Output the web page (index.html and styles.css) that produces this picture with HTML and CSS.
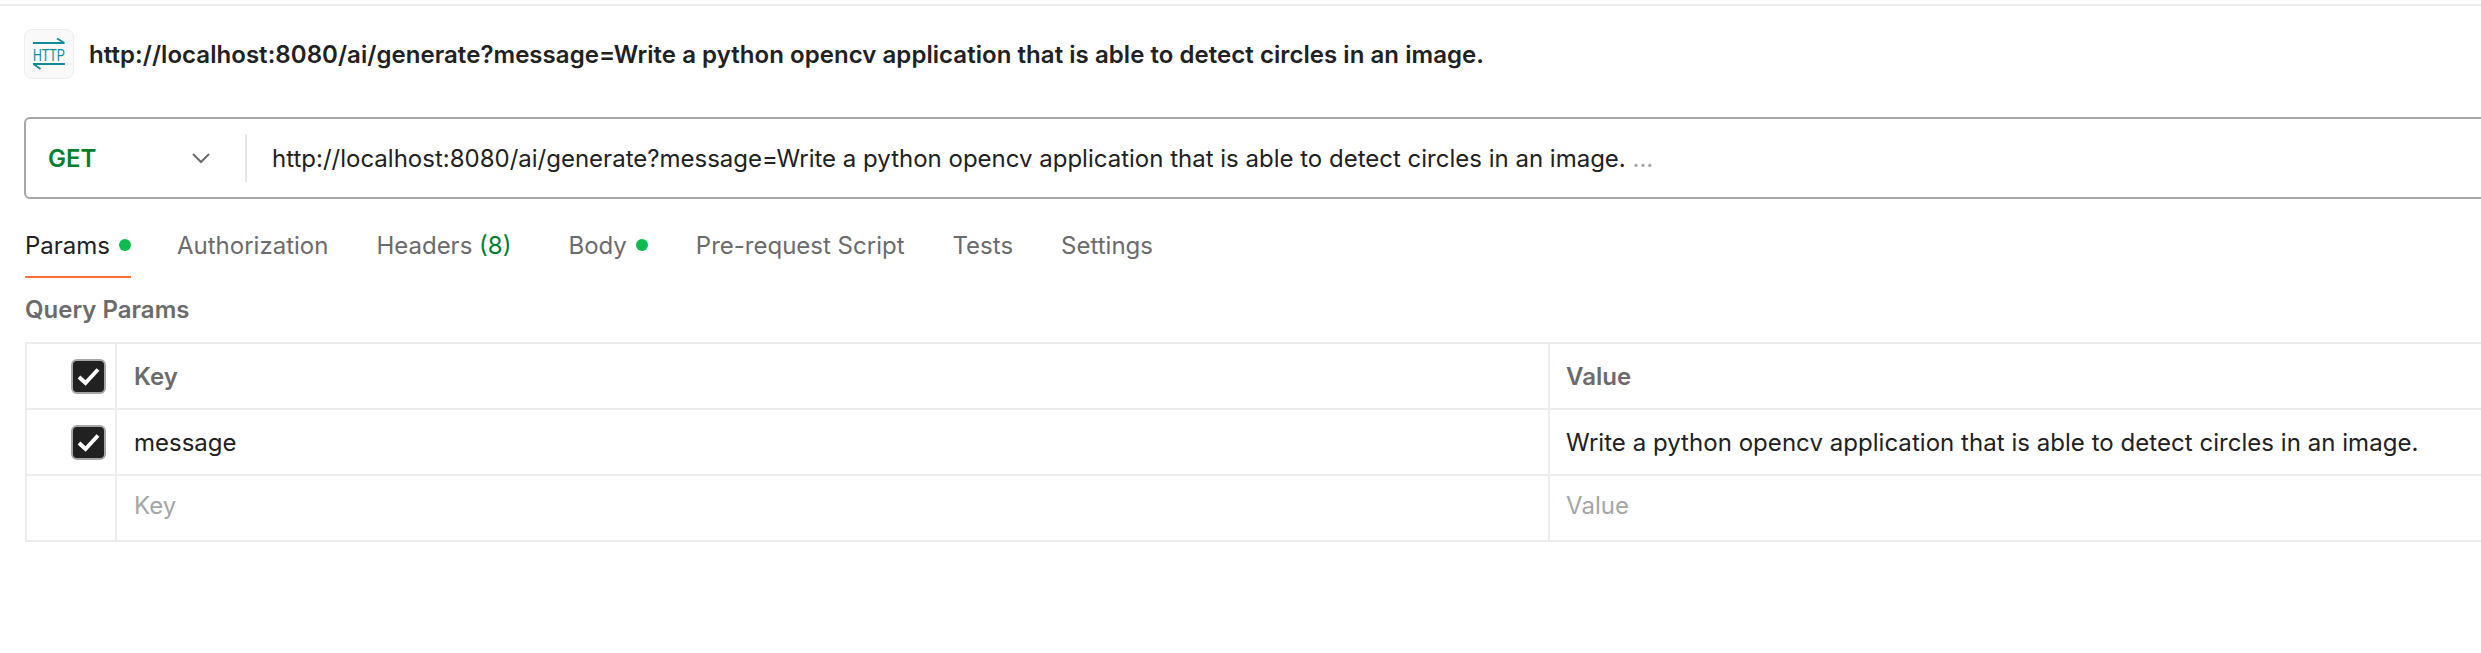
FILE: index.html
```html
<!DOCTYPE html>
<html lang="en">
<head>
<meta charset="utf-8">
<title>Request</title>
<link rel="stylesheet" href="styles.css">
</head>
<body>
<div class="topline"></div>
<header class="title-row">
  <div class="http-icon">
    <svg class="http-svg" width="34" height="34" viewBox="0 0 34 34" fill="none" stroke="#128a9b">
      <path d="M1 6H32.500M25 1.500L32.500 6" stroke-width="1.800"/>
      <path d="M1 27H33M1.500 27L8.500 32" stroke-width="1.800"/>
      <text x="1" y="23.500" textLength="32" lengthAdjust="spacingAndGlyphs" class="http-text">HTTP</text>
    </svg>
  </div>
  <h1 class="title">http://localhost:8080/ai/generate?message=Write a python opencv application that is able to detect circles in an image.</h1>
</header>
<section class="request">
  <div class="method">
    <span class="method-name">GET</span>
    <svg class="chevron" width="18" height="11" viewBox="0 0 18 11" fill="none" stroke="#6b6b6b" stroke-width="2"><path d="M1 1L9 9L17 1"/></svg>
  </div>
  <div class="url">http://localhost:8080/ai/generate?message=Write a python opencv application that is able to detect circles in an image.<span class="more"> ...</span></div>
</section>
<nav class="tabs">
  <div class="tab active">Params<span class="dot"></span></div>
  <div class="tab">Authorization</div>
  <div class="tab">Headers <span class="count">(8)</span></div>
  <div class="tab tab-body">Body<span class="dot"></span></div>
  <div class="tab">Pre-request Script</div>
  <div class="tab">Tests</div>
  <div class="tab">Settings</div>
</nav>
<h2 class="section-title">Query Params</h2>
<div class="table">
  <div class="cell check"><span class="checkbox"><svg width="23" height="19" viewBox="0 0 23 19" fill="none" stroke="#fff" stroke-width="4"><path d="M2 10L8.500 16L21 2.500"/></svg></span></div>
  <div class="cell head">Key</div>
  <div class="cell head value">Value</div>
  <div class="cell check"><span class="checkbox"><svg width="23" height="19" viewBox="0 0 23 19" fill="none" stroke="#fff" stroke-width="4"><path d="M2 10L8.500 16L21 2.500"/></svg></span></div>
  <div class="cell text">message</div>
  <div class="cell text value">Write a python opencv application that is able to detect circles in an image.</div>
  <div class="cell check"></div>
  <div class="cell placeholder">Key</div>
  <div class="cell placeholder value">Value</div>
</div>
</body>
</html>
```
FILE: styles.css
```css
html, body {
  margin: 0;
  padding: 0;
  height: 653px;
  overflow: hidden;
  background: #fff;
  font-family: Inter, "Liberation Sans", sans-serif;
  color: #212121;
}
.topline {
  height: 2px;
  margin-top: 4px;
  background: #ededed;
}
.title-row {
  display: flex;
  align-items: center;
  gap: 15px;
  margin: 23px 0 0 24px;
  height: 50px;
}
.http-icon {
  width: 48px;
  height: 48px;
  border: 1px solid #ededed;
  border-radius: 8px;
  background: #f9f9f9;
  display: flex;
  align-items: center;
  justify-content: center;
}
.http-svg { overflow: visible; }
.http-text {
  font-family: "Liberation Sans", sans-serif;
  font-size: 16px;
  fill: #128a9b;
  stroke: none;
}
.title {
  margin: 0;
  font-size: 24px;
  font-weight: 600;
  letter-spacing: 0.05px;
  white-space: nowrap;
}
.request {
  display: flex;
  align-items: center;
  height: 78px;
  margin: 38px -20px 0 24px;
  border: 2px solid #a6a6a6;
  border-radius: 6px;
}
.method {
  display: flex;
  align-items: center;
  justify-content: space-between;
  width: 221px;
  padding: 0 35px 0 22px;
  box-sizing: border-box;
  height: 48px;
  border-right: 2px solid #e6e6e6;
}
.method-name {
  font-size: 24px;
  font-weight: 600;
  color: #007f31;
}
.url {
  padding-left: 25px;
  font-size: 24px;
  white-space: nowrap;
}
.more { color: #a6a6a6; }
.tabs {
  display: flex;
  margin: 19px 0 0 25px;
  height: 60px;
  gap: 48px;
  font-size: 24px;
}
.tab {
  display: flex;
  align-items: center;
  height: 54px;
  color: #6b6b6b;
  white-space: pre;
}
.tab.active {
  color: #212121;
  box-sizing: border-box;
  height: 60px;
  margin-right: -2px;
  padding-bottom: 4px;
  border-bottom: 2px solid #ff6c37;
}
.tab-body { margin-left: 9px; }
.dot {
  width: 12px;
  height: 12px;
  margin-left: 9px;
  border-radius: 50%;
  background: #0cbb52;
}
.count { color: #007f31; }
.section-title {
  margin: 19px 0 0 25px;
  height: 26px;
  font-size: 24px;
  font-weight: 600;
  line-height: 26px;
  color: #6b6b6b;
}
.table {
  display: grid;
  grid-template-columns: 90px 1431px 1000px;
  grid-auto-rows: 66px;
  margin: 19px 0 0 25px;
  border-top: 2px solid #ededed;
  border-left: 2px solid #ededed;
}
.cell {
  display: flex;
  align-items: center;
  box-sizing: border-box;
  padding-left: 17px;
  border-bottom: 2px solid #ededed;
  font-size: 24px;
  white-space: nowrap;
}
.cell.check {
  justify-content: flex-end;
  padding: 0 9px 0 0;
  border-right: 2px solid #ededed;
}
.cell.value {
  border-left: 2px solid #ededed;
  padding-left: 16px;
  letter-spacing: 0.04px;
}
.head { font-weight: 600; color: #6b6b6b; }
.placeholder { color: #a6a6a6; padding-bottom: 5px; }
.checkbox {
  display: flex;
  align-items: center;
  justify-content: center;
  width: 31px;
  height: 31px;
  border: 2px solid #a6a6a6;
  border-radius: 6px;
  background: #212121;
}
```
